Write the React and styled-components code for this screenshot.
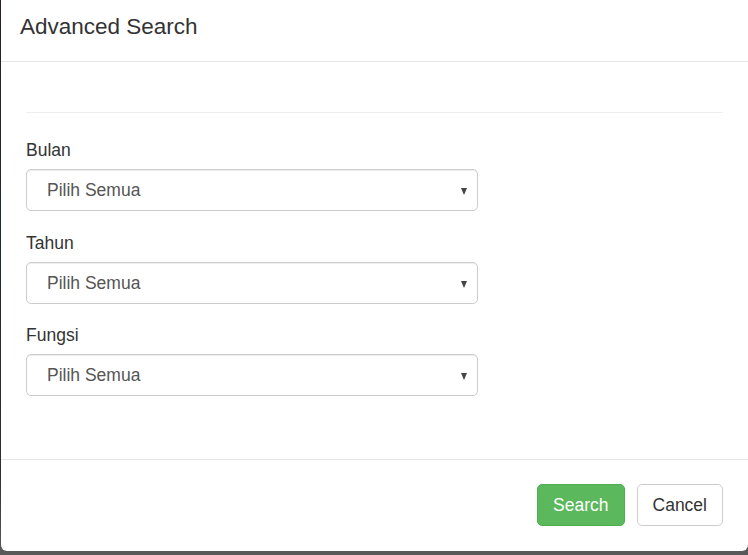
import styled, { createGlobalStyle } from "styled-components";

const GlobalStyle = createGlobalStyle`
  html, body {
    margin: 0;
    padding: 0;
    background: #3b3b3b;
    overflow: hidden;
  }
  * {
    box-sizing: border-box;
  }
`;

const Backdrop = styled.div`
  display: flow-root;
  height: 555px;
  padding-left: 1px;
  background: linear-gradient(to bottom, #2a2020 0%, #1f2a30 40%, #2e2e2e 85%, #5a5a5a 100%);
  font-family: "Liberation Sans", Arial, sans-serif;
  color: #333;
`;

const Modal = styled.div`
  margin-top: -8px;
  width: 747px;
  height: 559px;
  background: #fff;
  border-radius: 0 0 6px 6px;
  display: flex;
  flex-direction: column;
`;

const Header = styled.div`
  height: 70px;
  padding: 0 19px;
  display: flex;
  align-items: center;
  border-bottom: 1px solid #e5e5e5;
`;

const Title = styled.h4`
  margin: 0;
  font-size: 22.5px;
  font-weight: normal;
  color: #333;
`;

const Body = styled.div`
  flex: 1;
  padding: 0 25px;
`;

const Divider = styled.hr`
  margin: 50px 0 25px;
  border: 0;
  border-top: 1px solid #eee;
`;

const Group = styled.div`
  margin-bottom: 19.5px;
`;

const Label = styled.label`
  display: block;
  font-size: 17.5px;
  line-height: 25px;
  margin-bottom: 6px;
  color: #333;
`;

const SelectWrap = styled.div`
  position: relative;
  width: 452px;

  &::after {
    content: "";
    position: absolute;
    right: 11px;
    top: 19px;
    border-left: 3.5px solid transparent;
    border-right: 3.5px solid transparent;
    border-top: 7px solid #444;
    pointer-events: none;
  }
`;

const Select = styled.select`
  appearance: none;
  width: 100%;
  height: 42px;
  padding: 0 30px 0 20px;
  font-family: inherit;
  font-size: 17.5px;
  color: #555;
  background: #fff;
  border: 1px solid #ccc;
  border-radius: 5px;
  box-shadow: inset 0 1px 1px rgba(0, 0, 0, 0.075);
  outline: none;
`;

const Footer = styled.div`
  border-top: 1px solid #e5e5e5;
  padding: 24px 25px 25px;
  display: flex;
  justify-content: flex-end;
  gap: 12px;
`;

const Button = styled.button`
  height: 42px;
  padding: 0 15px;
  font-family: inherit;
  font-size: 17.5px;
  border-radius: 5px;
  border: 1px solid ${(p) => (p.$primary ? "#4cae4c" : "#ccc")};
  background: ${(p) => (p.$primary ? "#5cb85c" : "#fff")};
  color: ${(p) => (p.$primary ? "#fff" : "#333")};
  cursor: pointer;
`;

const fields = ["Bulan", "Tahun", "Fungsi"];

export default function App() {
  return (
    <>
      <GlobalStyle />
      <Backdrop>
        <Modal>
          <Header>
            <Title>Advanced Search</Title>
          </Header>
          <Body>
            <Divider />
            {fields.map((name) => (
              <Group key={name}>
                <Label>{name}</Label>
                <SelectWrap>
                  <Select defaultValue="">
                    <option value="">Pilih Semua</option>
                  </Select>
                </SelectWrap>
              </Group>
            ))}
          </Body>
          <Footer>
            <Button $primary>Search</Button>
            <Button>Cancel</Button>
          </Footer>
        </Modal>
      </Backdrop>
    </>
  );
}
